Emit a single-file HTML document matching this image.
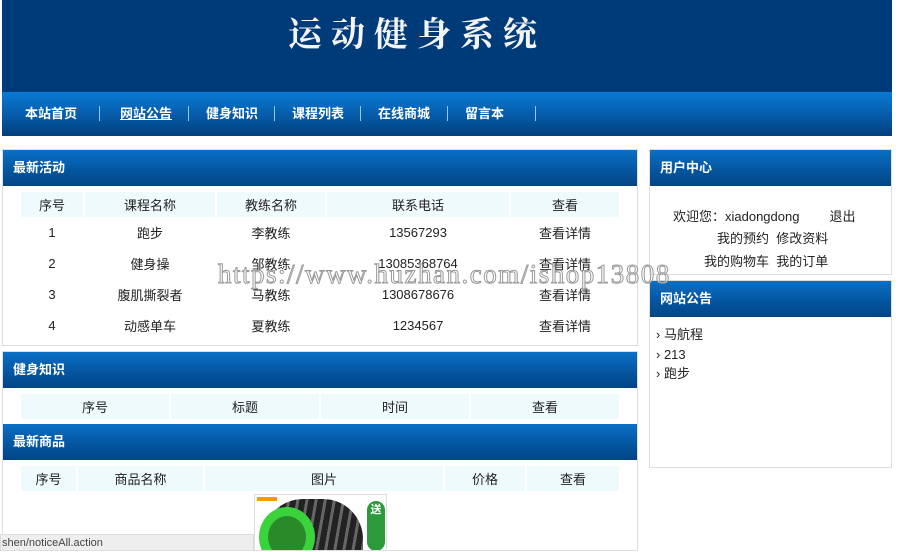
<!DOCTYPE html>
<html><head><meta charset="utf-8"><style>
*{margin:0;padding:0;box-sizing:border-box}
body{width:900px;height:551px;overflow:hidden;background:#fff;font-family:"Liberation Sans","Noto Sans CJK SC",sans-serif;font-size:13px;color:#222;position:relative}
.a{position:absolute}
.hd{background:linear-gradient(#0a6fc4,#04549e 60%,#034585);color:#fff;font-weight:bold;font-size:13px;padding-left:10px;line-height:36px;height:36px}
.box{border:1px solid #ddd;background:#fff}
table{border-collapse:separate;border-spacing:2px 0;width:100%}
td{text-align:center;height:31px;font-size:13px}
tr.th td{background:#effafd;height:25px}
.nv{position:absolute;top:104px;color:#fff;font-weight:bold;font-size:13px;line-height:20px;white-space:nowrap}
.sp{position:absolute;top:106px;width:1px;height:15px;background:#9cc3e8}
</style></head><body>
<div class="a" style="left:2px;top:0;width:890px;height:92px;background:#003b79"></div>
<div class="a" style="left:4px;top:10px;width:826px;text-align:center;color:#f4f4f4;font-size:34px;font-weight:bold;letter-spacing:9px;font-family:'Noto Serif CJK SC',serif;line-height:44px">运动健身系统</div>
<div class="a" style="left:2px;top:92px;width:890px;height:44px;background:linear-gradient(#0b7ad4,#0660b0 45%,#033f7c)"></div>
<div class="nv" style="left:25px">本站首页</div><div class="sp" style="left:99px"></div>
<div class="nv" style="left:120px;text-decoration:underline">网站公告</div><div class="sp" style="left:188px"></div>
<div class="nv" style="left:206px">健身知识</div><div class="sp" style="left:274px"></div>
<div class="nv" style="left:292px">课程列表</div><div class="sp" style="left:360px"></div>
<div class="nv" style="left:378px">在线商城</div><div class="sp" style="left:447px"></div>
<div class="nv" style="left:465px">留言本</div><div class="sp" style="left:535px"></div>

<div class="a box" style="left:2px;top:149px;width:636px;height:197px">
<div class="hd">最新活动</div>
<div style="padding:6px 16px 0 16px"><table>
<tr class="th"><td style="width:62px">序号</td><td style="width:130px">课程名称</td><td style="width:108px">教练名称</td><td style="width:182px">联系电话</td><td>查看</td></tr>
<tr><td>1</td><td>跑步</td><td>李教练</td><td>13567293</td><td>查看详情</td></tr>
<tr><td>2</td><td>健身操</td><td>邹教练</td><td>13085368764</td><td>查看详情</td></tr>
<tr><td>3</td><td>腹肌撕裂者</td><td>马教练</td><td>1308678676</td><td>查看详情</td></tr>
<tr><td>4</td><td>动感单车</td><td>夏教练</td><td>1234567</td><td>查看详情</td></tr>
</table></div></div>

<div class="a box" style="left:2px;top:351px;width:636px;height:200px">
<div class="hd">健身知识</div>
<div style="padding:6px 16px 0 16px"><table>
<tr class="th"><td>序号</td><td>标题</td><td>时间</td><td>查看</td></tr></table></div>
<div class="hd" style="margin-top:5px">最新商品</div>
<div style="padding:6px 16px 0 16px"><table>
<tr class="th"><td style="width:55px">序号</td><td style="width:125px">商品名称</td><td style="width:238px">图片</td><td style="width:80px">价格</td><td>查看</td></tr></table></div>
</div>
<div class="a" style="left:254px;top:494px;width:133px;height:57px;border:1px solid #ddd;background:#fff;overflow:hidden">
<div class="a" style="left:2px;top:2px;width:20px;height:4px;background:#f90"></div>
<div class="a" style="left:8px;top:4px;width:100px;height:70px;border-radius:40px 40px 0 0;background:repeating-linear-gradient(100deg,#222 0 6px,#666 6px 9px)"></div>
<div class="a" style="left:4px;top:12px;width:56px;height:60px;border-radius:50%;border:9px solid #3bd33b;background:#2a8a2a"></div>
<div class="a" style="left:112px;top:6px;width:18px;height:50px;border-radius:9px;background:#2a9a3a;color:#fff;font-size:11px;text-align:center;font-weight:bold">送</div>
</div>
<div class="a" style="left:0;top:534px;width:254px;height:17px;background:#eee;border:1px solid #ddd;font-size:11px;color:#444;line-height:17px;padding-left:1px">shen/noticeAll.action</div>

<div class="a box" style="left:649px;top:149px;width:243px;height:126px">
<div class="hd">用户中心</div>
<div class="a" style="left:23px;top:58px;font-size:13px;line-height:18px">欢迎您：xiadongdong<span style="margin-left:30px">退出</span></div>
<div class="a" style="left:67px;top:80px;line-height:18px">我的预约&nbsp; 修改资料</div>
<div class="a" style="left:54px;top:103px;line-height:18px">我的购物车&nbsp; 我的订单</div>
</div>
<div class="a box" style="left:649px;top:280px;width:243px;height:188px">
<div class="hd">网站公告</div>
<div style="padding:8px 0 0 6px;line-height:19.5px"><div>› 马航程</div><div>› 213</div><div>› 跑步</div></div>
</div>
<div class="a" style="left:218px;top:259px;font-family:'Liberation Serif',serif;font-size:27px;color:rgba(255,255,255,.55);-webkit-text-stroke:1px #999;letter-spacing:1.5px;white-space:nowrap">https://www.huzhan.com/ishop13808</div>
</body></html>
